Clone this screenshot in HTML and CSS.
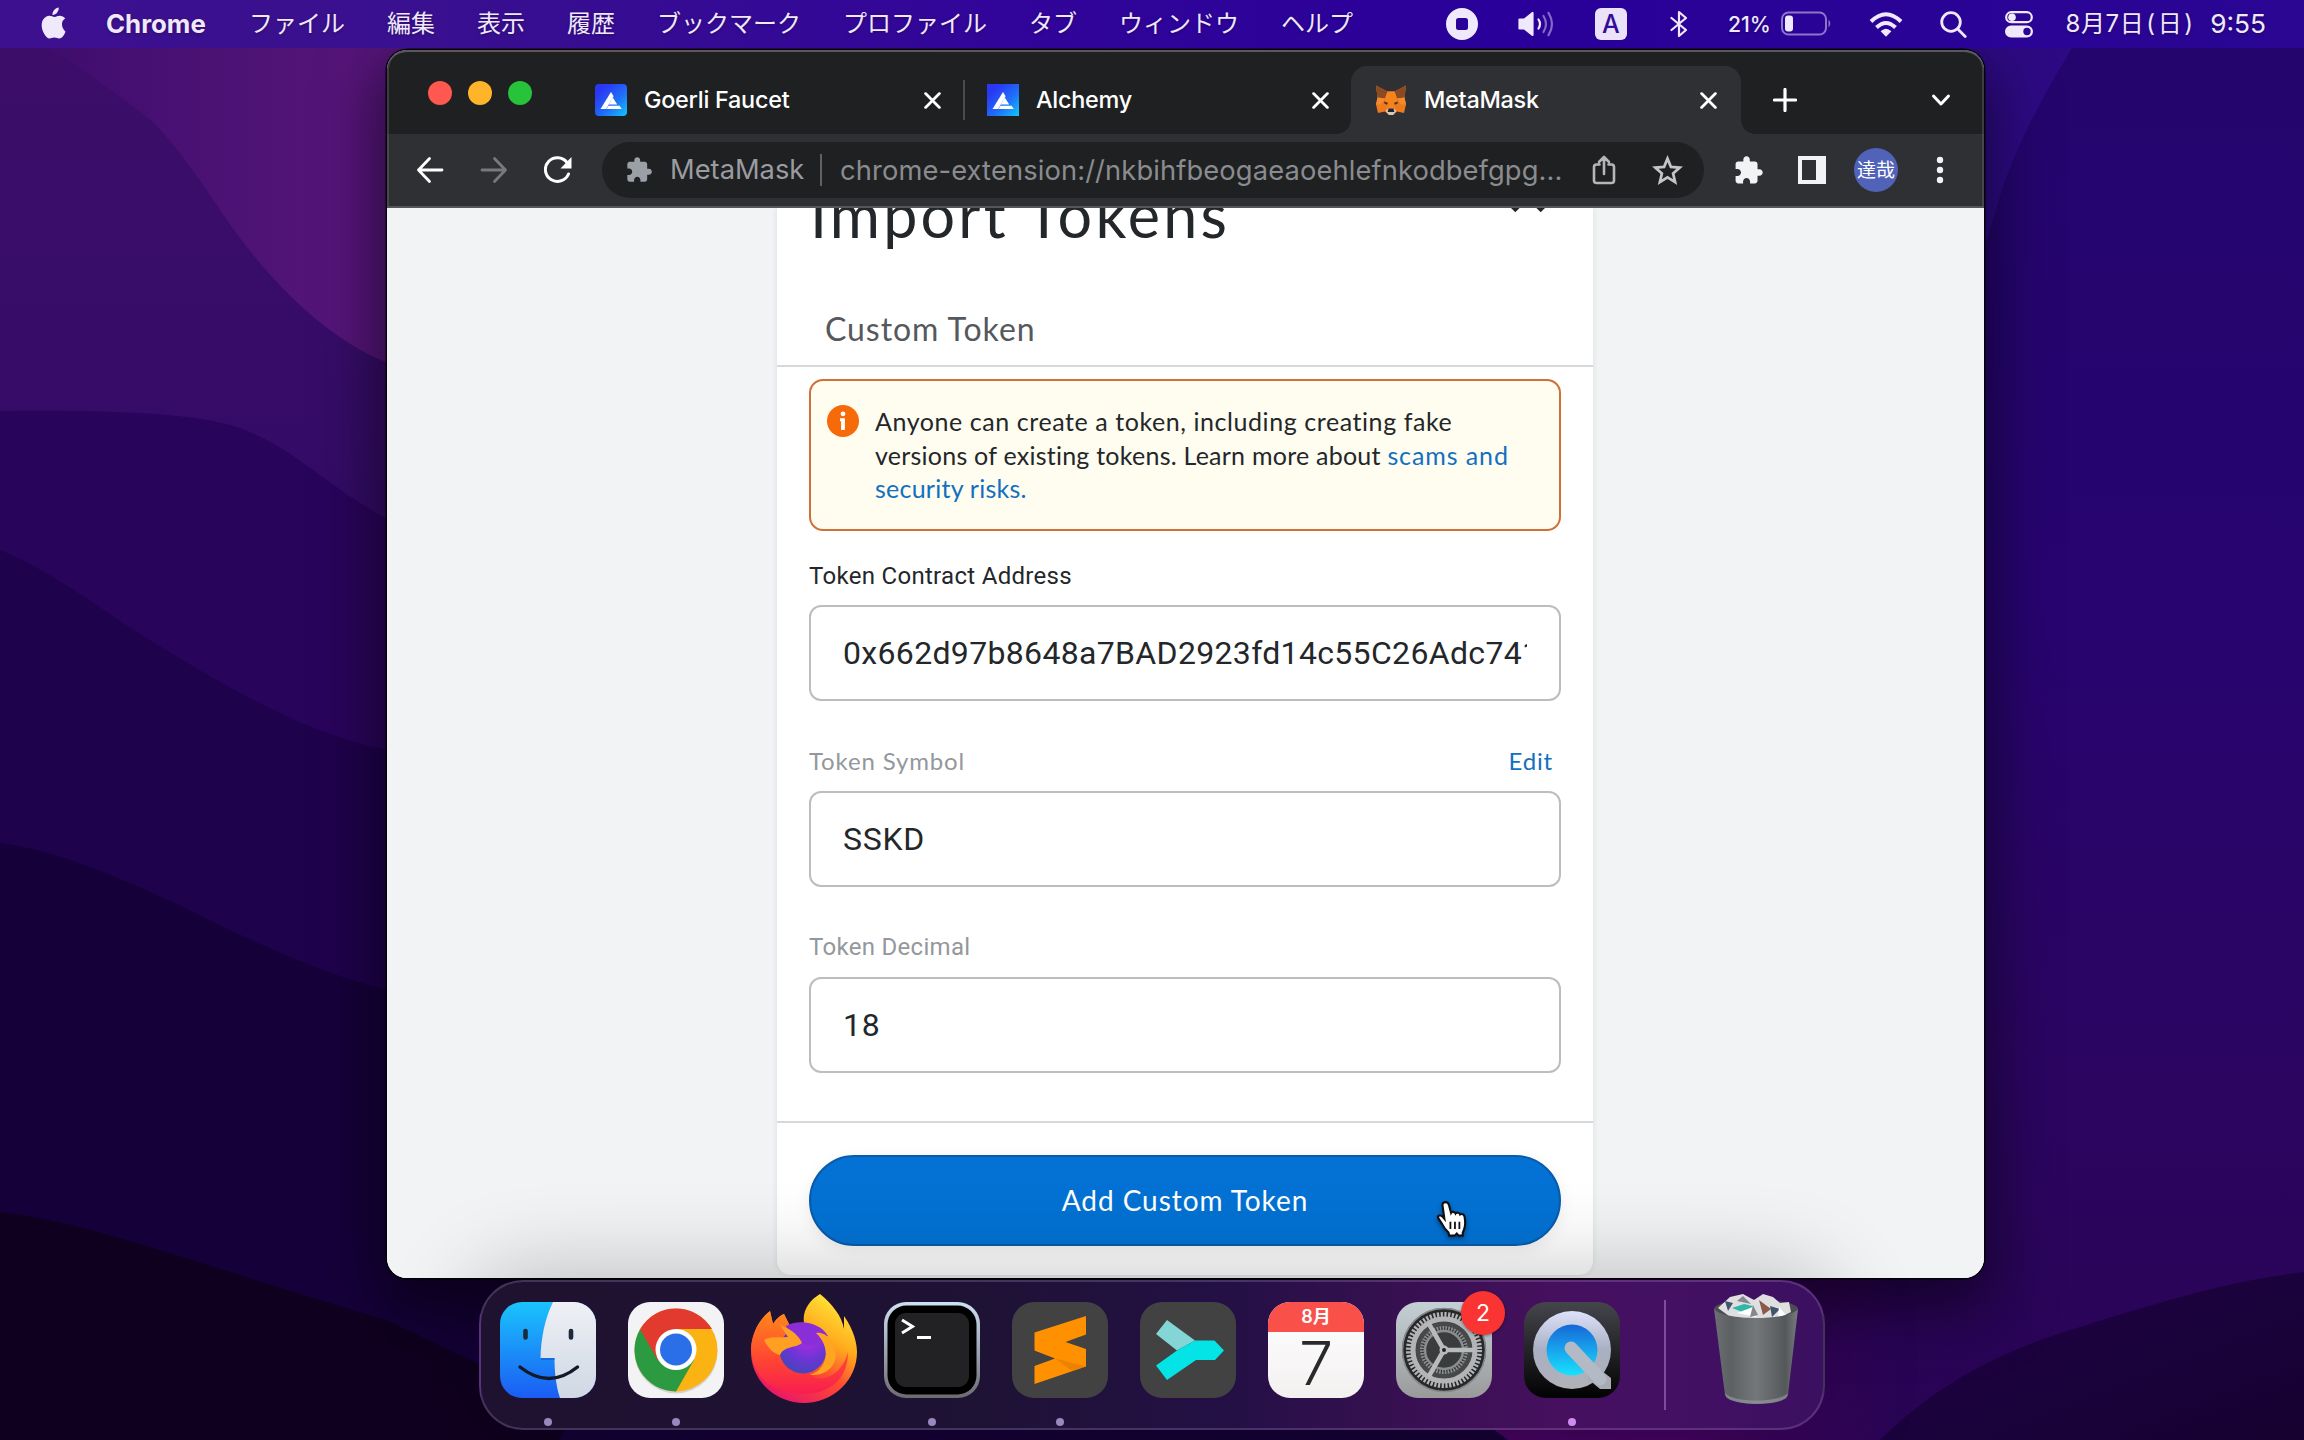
FILE: index.html
```html
<!DOCTYPE html>
<html lang="ja">
<head>
<meta charset="utf-8">
<title>MetaMask</title>
<link rel="stylesheet" href="styles.css">
</head>
<body>
<svg width="0" height="0" class="defs">
  <defs>
    <symbol id="puzzle" viewBox="0 0 24 24"><path d="M20.5 11H19V7c0-1.100-.9-2-2-2h-4V3.500C13 2.120 11.880 1 10.500 1S8 2.120 8 3.500V5H4c-1.100 0-1.990.9-1.990 2v3.800H3.500c1.490 0 2.700 1.210 2.700 2.700s-1.210 2.700-2.700 2.700H2V20c0 1.100.9 2 2 2h3.800v-1.500c0-1.490 1.210-2.700 2.700-2.700s2.700 1.210 2.700 2.700V22H17c1.100 0 2-.9 2-2v-4h1.500c1.380 0 2.500-1.120 2.500-2.500S21.880 11 20.500 11z"/></symbol>
    <symbol id="cross" viewBox="0 0 16 16"><path d="M1.500 1.500l13 13M14.500 1.500l-13 13" fill="none" stroke="currentColor" stroke-width="2.600" stroke-linecap="round"/></symbol>
    <symbol id="alchemy" viewBox="0 0 32 32"><path d="M16 8l2.600 4.200L11.200 25H5.500z" fill="#fff"/><path d="M17.800 13.500l4.400 7H13.800z" fill="#fff"/><path d="M13.500 21.800h11l2.300 3.200H11.500z" fill="#fff"/></symbol>
  </defs>
</svg>

<svg class="wallpaper" viewBox="0 0 2304 1440" preserveAspectRatio="none">
  <defs>
    <linearGradient id="base" x1="0" y1="0" x2="1" y2="0"><stop offset="0" stop-color="#3b0c6c"/><stop offset="0.150" stop-color="#551579"/><stop offset="0.500" stop-color="#4a1080"/><stop offset="0.860" stop-color="#2e0a84"/><stop offset="1" stop-color="#290a80"/></linearGradient>
    <linearGradient id="w1" x1="0" y1="0" x2="0" y2="1"><stop offset="0" stop-color="#3c0e6a"/><stop offset="0.350" stop-color="#330b66"/><stop offset="1" stop-color="#320963"/></linearGradient>
    <linearGradient id="r1" x1="0" y1="0" x2="0" y2="1"><stop offset="0" stop-color="#24056e"/><stop offset="0.400" stop-color="#270470"/><stop offset="0.750" stop-color="#2b0560"/><stop offset="1" stop-color="#290454"/></linearGradient>
    <linearGradient id="r2" x1="0" y1="0" x2="1" y2="1"><stop offset="0" stop-color="#1f0348"/><stop offset="1" stop-color="#160130"/></linearGradient>
    <linearGradient id="glow" gradientUnits="userSpaceOnUse" x1="1480" y1="0" x2="1900" y2="0"><stop offset="0" stop-color="#45035f"/><stop offset="0.500" stop-color="#430360"/><stop offset="1" stop-color="#430360" stop-opacity="0"/></linearGradient>
  </defs>
  <rect width="2304" height="1440" fill="url(#base)"/>
  <path d="M0 48H50C90 75 120 95 153 122C190 160 215 205 243 242C280 290 330 340 386 362L900 450V1440H0z" fill="url(#w1)"/>
  <path d="M0 411C60 410 180 410 230 425C290 442 330 490 386 518L900 700V1440H0z" fill="#29045b"/>
  <path d="M0 550C60 575 100 610 150 640C230 690 310 735 386 750L900 850V1440H0z" fill="#1f024c"/>
  <path d="M0 843C60 850 140 885 230 930C290 958 330 975 386 990L900 1100V1440H0z" fill="#16003a"/>
  <path d="M0 1212C90 1222 200 1265 386 1320L640 1440H0z" fill="#100020"/>
  <path d="M2072 48C2040 100 2015 150 2002 190C1980 260 1960 340 1900 400H1400V1440H2304V48z" fill="url(#r1)"/>
  <path d="M1400 1240H1910V1440H1400z" fill="url(#glow)"/>
  <path d="M640 1240H1380C1400 1330 1450 1400 1508 1440H560z" fill="#150036"/>
  <path d="M1880 1440C1930 1390 1990 1355 2070 1330C2150 1305 2230 1280 2304 1272V1440z" fill="url(#r2)"/>
</svg>

<header class="menubar">
  <svg class="apple" viewBox="0 0 26 32" fill="currentColor"><path d="M18.200 0.500c.3 2-.6 3.900-1.700 5.200-1.200 1.400-2.900 2.300-4.500 2.200-.3-1.900.6-3.800 1.700-5 1.200-1.300 3-2.300 4.500-2.400zM25 24.800c-.7 1.600-1 2.300-1.900 3.700-1.300 1.900-2.900 3-4.500 3-1.700 0-2.300-1-4.800-1s-3.200 1-4.800 1c-1.800 0-3.200-1.400-4.400-3.200C1.100 23.300 0 16.500 2.700 12.500c1.500-2.300 3.900-3.700 6.200-3.700 2.100 0 3.500 1.100 5.200 1.100 1.700 0 2.800-1.100 5.300-1.100 1.900 0 3.900 1 5.300 2.800-4.700 2.600-3.900 9.300.3 13.200z"/></svg>
  <nav class="menus">
    <b>Chrome</b><span>ファイル</span><span>編集</span><span>表示</span><span>履歴</span><span>ブックマーク</span><span>プロファイル</span><span>タブ</span><span>ウィンドウ</span><span>ヘルプ</span>
  </nav>
  <div class="status">
    <svg width="32" height="32" viewBox="0 0 32 32"><path fill="currentColor" fill-rule="evenodd" d="M16 0a16 16 0 100 32 16 16 0 000-32zm-3.500 10h7a2.500 2.500 0 012.500 2.500v7a2.500 2.500 0 01-2.500 2.500h-7a2.500 2.500 0 01-2.500-2.500v-7a2.500 2.500 0 012.500-2.500z"/></svg>
    <svg class="vol" width="36" height="26" viewBox="0 0 36 26" fill="none" stroke="currentColor" stroke-width="2.200" stroke-linecap="round"><path d="M1.500 8.500h5L14.500 2v22l-8-6.500h-5z" fill="currentColor" stroke-linejoin="round"/><path d="M20.500 8.500q3 4.500 0 9"/><path d="M25.500 5q5 8 0 16M30.500 1.800q7 11.200 0 22.400" opacity=".45"/></svg>
    <span class="ime">A</span>
    <svg class="bt" width="18" height="28" viewBox="0 0 18 28" fill="none" stroke="currentColor" stroke-width="2.200" stroke-linejoin="round" stroke-linecap="round"><path d="M1.500 8L16 20l-7 6V2l7 6L1.500 20"/></svg>
    <span class="pct">21%</span>
    <svg class="bat" width="52" height="26" viewBox="0 0 52 26"><rect x="1" y="1.500" width="44" height="22" rx="6.500" fill="none" stroke="currentColor" stroke-width="2" opacity=".5"/><rect x="4" y="4.500" width="8" height="16" rx="3" fill="currentColor"/><path d="M47.500 8.500q3.500 4 0 8z" fill="currentColor" opacity=".5"/></svg>
    <svg class="wifi" width="34" height="25" viewBox="0 0 34 25" fill="none" stroke="currentColor" stroke-width="4"><path d="M2 9.500Q17-5 32 9.500"/><path d="M7.500 15.500q9.500-9 19 0"/><path d="M11.600 19.200q5.400-5 10.800 0L17 24.800z" fill="currentColor" stroke="none"/></svg>
    <svg class="find" width="27" height="27" viewBox="0 0 27 27" fill="none" stroke="currentColor" stroke-width="2.800" stroke-linecap="round"><circle cx="11" cy="11" r="9.300"/><path d="M17.800 18l7.400 7.400"/></svg>
    <svg class="cc" width="28" height="27" viewBox="0 0 28 27"><rect x="1.200" y="1.200" width="25.600" height="10" rx="5" fill="none" stroke="currentColor" stroke-width="2.200"/><circle cx="7" cy="6.200" r="3.800" fill="currentColor"/><path fill="currentColor" fill-rule="evenodd" d="M6 14.500h16a6 6 0 010 12H6a6 6 0 010-12zm16 2.300a3.700 3.700 0 100 7.400 3.700 3.700 0 000-7.400z"/></svg>
    <span class="date">8月7日<i>(</i>日<i>)</i></span><span class="time">9:55</span>
  </div>
</header>

<main class="window">
  <div class="tabstrip">
    <div class="lights"><i class="red"></i><i class="amber"></i><i class="green"></i></div>
    <div class="tab first">
      <span class="fav round"><svg width="32" height="32"><use href="#alchemy"/></svg></span><span class="name">Goerli Faucet</span>
      <svg class="x"><use href="#cross"/></svg>
    </div>
    <div class="tab second">
      <span class="fav"><svg width="32" height="32"><use href="#alchemy"/></svg></span><span class="name">Alchemy</span>
      <svg class="x"><use href="#cross"/></svg>
    </div>
    <div class="tab active">
      <svg class="fox" viewBox="0 0 32 30"><path d="M1 0l11.500 6h7L31 0l-1.500 12L31 19l-2 8.500-7-1.500-4 3.500h-4L10 26l-7 1.500L1 19l1.500-7z" fill="#ee7a1d"/><path d="M1 0l11.500 6L10 13l-7.500-1zM31 0L19.500 6 22 13l7.500-1z" fill="#8a4a22"/><path d="M12.500 6h7L22 13l-3 10h-6l-3-10z" fill="#f5841f"/><path d="M2.500 12L10 13l-4 6H1zM29.500 12L22 13l4 6h5z" fill="#f28a2e"/><path d="M9 16l4 1.200-.8 2-2.700-1zM23 16l-4 1.200.8 2 2.700-1z" fill="#5a3320"/><path d="M10.500 25.500l2.500-2.500h6l2.500 2.500L18 29.500h-4z" fill="#d9c7b8"/><path d="M13.500 23h5l.8 3.500h-6.600z" fill="#22222a"/></svg>
      <span class="name">MetaMask</span>
      <svg class="x"><use href="#cross"/></svg>
    </div>
    <svg class="plus" viewBox="0 0 24 24"><path d="M12 1.500v21M1.500 12h21" stroke="#fff" stroke-width="3.200" stroke-linecap="round"/></svg>
    <svg class="chev" viewBox="0 0 20 14"><path d="M2.500 3l7.500 8 7.500-8" fill="none" stroke="#fff" stroke-width="3" stroke-linecap="round" stroke-linejoin="round"/></svg>
  </div>
  <div class="toolbar">
    <svg class="nav" viewBox="0 0 28 28" fill="none" stroke="#fff" stroke-width="2.800" stroke-linecap="round" stroke-linejoin="round"><path d="M26 14H2.500M13.500 2.500L2.500 14l11 11.500"/></svg>
    <svg class="nav" viewBox="0 0 28 28" fill="none" stroke="#77797d" stroke-width="2.800" stroke-linecap="round" stroke-linejoin="round"><path d="M2 14h23.500M14.500 2.500L25.500 14l-11 11.500"/></svg>
    <svg class="nav" viewBox="0 0 28 28"><path d="M24.500 18A12 11.800 0 1123 6.500" fill="none" stroke="#fff" stroke-width="3" stroke-linecap="round"/><path d="M27.500 1v11.500H16.500z" fill="#fff"/></svg>
    <div class="omnibox">
      <svg class="ext" fill="#9aa0a6"><use href="#puzzle"/></svg>
      <span class="site">MetaMask</span>
      <span class="url">chrome-extension://nkbihfbeogaeaoehlefnkodbefgpg...</span>
      <svg class="share" viewBox="0 0 24 30" fill="none" stroke="#b5b6b8" stroke-width="2.600" stroke-linejoin="round" stroke-linecap="round"><path d="M7.500 9.500H4.500a2.500 2.500 0 00-2.500 2.500v13.500A2.500 2.500 0 004.500 28h15a2.500 2.500 0 002.500-2.500V12a2.500 2.500 0 00-2.500-2.500h-3M12 19V2.500M7 7l5-5 5 5"/></svg>
      <svg class="star" viewBox="0 0 30 30" fill="none" stroke="#c4c5c7" stroke-width="2.600"><path d="M15 3.500l3.300 8 8.600.7-6.500 5.600 2 8.400L15 21.700l-7.400 4.500 2-8.400-6.500-5.600 8.600-.7z"/></svg>
    </div>
    <svg class="ext2" fill="#f1f3f4"><use href="#puzzle"/></svg>
    <svg class="panel" viewBox="0 0 28 28"><path fill="#f1f3f4" fill-rule="evenodd" d="M0 0h28v28H0zM4 4v20h14V4z"/></svg>
    <span class="avatar">達哉</span>
    <svg class="dots" viewBox="0 0 8 28" fill="#f1f3f4"><circle cx="4" cy="4" r="3.200"/><circle cx="4" cy="14" r="3.200"/><circle cx="4" cy="24" r="3.200"/></svg>
  </div>
  <div class="page">
    <section class="card">
      <div class="head">
        <h1>Import Tokens</h1>
        <svg class="close" viewBox="0 0 40 40"><path d="M5 5l30 30M35 5L5 35" stroke="#24272a" stroke-width="6.500"/></svg>
      </div>
      <div class="tabs"><span>Custom Token</span></div>
      <div class="body">
        <div class="warn">
          <svg class="info" viewBox="0 0 32 32"><circle cx="16" cy="16" r="16" fill="#f66a0a"/><circle cx="16" cy="8.800" r="2.400" fill="#fff"/><path d="M13 13.200h4.900v11.800h-3.800v-8.800H13z" fill="#fff"/></svg>
          <p><span>Anyone can create a token, including creating fake</span><br>versions of existing tokens. Learn more about <a class="wide">scams and</a><br><a>security risks.</a></p>
        </div>
        <div class="label dark">Token Contract Address</div>
        <div class="field address"><div class="clip">0x662d97b8648a7BAD2923fd14c55C26Adc74110F</div></div>
        <div class="label row"><span class="geo">Token Symbol</span><a class="edit">Edit</a></div>
        <div class="field short">SSKD</div>
        <div class="label">Token Decimal</div>
        <div class="field short">18</div>
      </div>
      <div class="foot"><button>Add Custom Token</button></div>
    </section>
  </div>
</main>

<div class="dock">
  <div class="app run">
    <svg viewBox="0 0 96 96"><defs><linearGradient id="fb" x1="0" y1="0" x2="0" y2="1"><stop offset="0" stop-color="#1ac4fd"/><stop offset="1" stop-color="#1b5cf3"/></linearGradient><linearGradient id="fw" x1="0" y1="0" x2="0" y2="1"><stop offset="0" stop-color="#eef0f5"/><stop offset="1" stop-color="#cfd8e4"/></linearGradient><clipPath id="sq"><rect width="96" height="96" rx="22"/></clipPath></defs>
    <g clip-path="url(#sq)"><rect width="96" height="96" fill="url(#fb)"/><path d="M53 0C45 16 41 36 40.500 56h14c0 14 1.500 28 5.500 40H96V0z" fill="url(#fw)"/><path d="M54.500 57H41" stroke="#1560d8" stroke-width="1.500"/></g>
    <path d="M25.500 29v6.500M71 29v6.500" stroke="#1c2a3c" stroke-width="4.600" stroke-linecap="round"/><path d="M20 65q29 23 57.500 0" fill="none" stroke="#121a2a" stroke-width="3.400" stroke-linecap="round"/></svg>
  </div>
  <div class="app run">
    <svg viewBox="0 0 96 96"><rect width="96" height="96" rx="22" fill="#f3f2f5"/><circle cx="48" cy="50" r="41.500" fill="#000" opacity=".13"/>
    <circle cx="48" cy="48" r="41.500" fill="#fbb314"/>
    <path d="M48 48L12.060 27.250A41.500 41.500 0 0048 89.500L66 58z" fill="#2b9a41"/>
    <path d="M48 27H83.900A41.500 41.500 0 0012.060 27.250L30 58.500L48 48z" fill="#e23a2e"/>
    <circle cx="48" cy="47.500" r="20.500" fill="#fff"/><circle cx="48" cy="47.500" r="16" fill="#2a6fe8"/></svg>
  </div>
  <div class="app">
    <svg viewBox="0 0 96 96" overflow="visible"><defs><linearGradient id="ff" x1=".85" y1="0" x2=".25" y2="1"><stop offset="0" stop-color="#fff03d"/><stop offset=".35" stop-color="#ffac1c"/><stop offset=".62" stop-color="#ff4a32"/><stop offset="1" stop-color="#e6136b"/></linearGradient><linearGradient id="fo" x1="0" y1="0" x2="0" y2="1"><stop offset="0" stop-color="#ff8a1a"/><stop offset=".6" stop-color="#ff4433"/><stop offset="1" stop-color="#f81d4f"/></linearGradient><radialGradient id="fp" cx=".6" cy=".25" r=".8"><stop offset="0" stop-color="#b22be4"/><stop offset=".6" stop-color="#6a35d4"/><stop offset="1" stop-color="#4247b8"/></radialGradient></defs>
    <path d="M64-8C76 2 86 14 88 27V14C98 28 101 42 101 50A53 51 0 01-5 50C-5 34 2 18 14 9L17 22C21 16 25 13 28 12L34 24C40 21 45 20 48 21C46 8 54-2 64-8z" fill="url(#ff)"/>
    <path d="M-5 46C-4 30 4 17 14 9L17 22C21 16 25 13 28 12L34 24C44 30 48 40 44 50C50 90 84 80 92 50C92 80 70 92 48 92C18 92-4 76-5 46z" fill="url(#fo)"/>
    <circle cx="47" cy="48" r="23.500" fill="url(#fp)"/><path d="M30 24C40 18 62 18 72 34L56 44L36 40z" fill="#8a2fd8"/>
    <path d="M60 31C68 29 80 38 80 54C78 68 66 74 54 73C74 66 74 44 60 31z" fill="#ffa51f"/>
    <path d="M8 38C14 34 24 36 32 35L24 23C38 28 44 36 46 41C40 46 28 44 24 53C18 52 12 46 8 38z" fill="#ffa023"/></svg>
  </div>
  <div class="app run">
    <svg viewBox="0 0 96 96"><defs><linearGradient id="tb" x1="0" y1="0" x2="0" y2="1"><stop offset="0" stop-color="#cfe0f5"/><stop offset="1" stop-color="#6d6b70"/></linearGradient></defs><rect width="96" height="96" rx="22" fill="url(#tb)"/><rect x="3.500" y="3.500" width="89" height="89" rx="19" fill="#000"/><rect x="11" y="11" width="74" height="74" rx="11" fill="#222224"/><path d="M18 18l10.500 6.500L18 31M33 35.500h14" fill="none" stroke="#fff" stroke-width="3"/></svg>
  </div>
  <div class="app run">
    <svg viewBox="0 0 96 96"><rect width="96" height="96" rx="22" fill="#424242"/><path d="M74 14v18.500L53.500 40 74 47v17.500L22.500 48.500V30.500z" fill="#ff9100"/><path d="M74 64.500L22.500 82V64L43 56.500 22.500 48.500 74 47.500z" fill="#ff9100"/><path d="M43 56.500L74 64.500 60 69z" fill="#d97400" opacity=".5"/></svg>
  </div>
  <div class="app">
    <svg viewBox="0 0 96 96"><rect width="96" height="96" rx="22" fill="#424242"/><path d="M27 18L55 38.500 37 48.500 16 32z" fill="#84d6d6"/><path d="M55 38.500H74.500L84 48.500 75 58H56L27 78 16 63.500 37 48.500z" fill="#04e4e6"/></svg>
  </div>
  <div class="app cal"><div>8月</div><b>7</b></div>
  <div class="app">
    <svg viewBox="0 0 96 96"><defs><linearGradient id="sb" x1="0" y1="0" x2="0" y2="1"><stop offset="0" stop-color="#c4d0d6"/><stop offset="1" stop-color="#9a9a9a"/></linearGradient></defs><rect width="96" height="96" rx="22" fill="url(#sb)"/><circle cx="48" cy="48" r="42" fill="#26282a"/><circle cx="48" cy="48" r="41.500" fill="none" stroke="#85898c" stroke-width="1.500"/>
    <circle cx="48" cy="48" r="35.500" fill="none" stroke="#b2b4b6" stroke-width="5" stroke-dasharray="2.200 1.520"/><circle cx="48" cy="48" r="31" fill="#46484a" stroke="#b2b4b6" stroke-width="5"/><circle cx="48" cy="48" r="22" fill="#2b2d2f" stroke="#8b8e90" stroke-width="4" stroke-dasharray="1.600 1.300"/><circle cx="48" cy="48" r="19" fill="#3a3c3e" stroke="#8b8e90" stroke-width="2.500"/><path d="M48 48h31M48 48L32.500 21.200M48 48L32.500 74.800" stroke="#b8babc" stroke-width="4.600"/><circle cx="48" cy="48" r="4.500" fill="#b8babc"/><circle cx="48" cy="48" r="2" fill="#222"/></svg>
    <span class="badge">2</span>
  </div>
  <div class="app run bright">
    <svg viewBox="0 0 96 96"><defs><linearGradient id="qb" x1="0" y1="0" x2="0" y2="1"><stop offset="0" stop-color="#45464c"/><stop offset="1" stop-color="#020203"/></linearGradient><linearGradient id="qs" x1="0" y1="0" x2="0" y2="1"><stop offset="0" stop-color="#dde2fa"/><stop offset=".5" stop-color="#a9afc2"/><stop offset="1" stop-color="#b0b2b8"/></linearGradient><linearGradient id="qi" x1="0" y1="0" x2="0" y2="1"><stop offset="0" stop-color="#1767d8"/><stop offset="1" stop-color="#18e2ff"/></linearGradient></defs><rect width="96" height="96" rx="22" fill="url(#qb)"/><circle cx="48" cy="48" r="39" fill="url(#qs)"/><path d="M62 66L78 69 87 76V87H76L64 77z" fill="#a9abb2"/><circle cx="48" cy="48" r="25.500" fill="url(#qi)"/><path d="M47 46L76 77" stroke="#b4b9c6" stroke-width="13" stroke-linecap="round"/></svg>
  </div>
  <div class="rule"></div>
  <svg class="trash" viewBox="0 0 86 112"><defs><linearGradient id="tr" x1="0" y1="0" x2="1" y2="0"><stop offset="0" stop-color="#6c7073"/><stop offset=".2" stop-color="#5c6063"/><stop offset=".5" stop-color="#74787a"/><stop offset=".85" stop-color="#54585b"/><stop offset="1" stop-color="#787c7e"/></linearGradient></defs>
  <ellipse cx="43" cy="16" rx="42" ry="9.500" fill="#4b4d51"/><path d="M5 15L17 4l13-3 11 6L50 1l10 3 7 6 9-1 2 10-12 6-46 1z" fill="#dfdfe2"/><path d="M19 15l12-4 9 2-6 8z" fill="#2fb8a6"/><path d="M46 7l12 9-8 6z" fill="#8c5a4a"/><path d="M57 13l10 3-8 8zM12 8l8 2-5 8z" fill="#40546c"/><path d="M24 20l16-6 3 10zM66 14l7 8-8 2z" fill="#fff"/><path d="M30 3l8 8-14-3zM40 12l5 10-8 2z" fill="#86878c"/>
  <path d="M1 16C10 28 76 28 85 16L75 102C70 114 18 114 12 102z" fill="url(#tr)"/><path d="M12 100C20 110 66 110 75 100L74 104C68 113 20 113 13 104z" fill="#9a9ea1" opacity=".6"/></svg>
</div>

<svg class="cursor" viewBox="0 0 32 36"><path d="M10 2c2 0 2.800 1.300 3.200 3l1.900 7.200c.6-1.200 3.500-1.400 4.300.6 1-1.400 3.700-1 4.300.9 1.300-1 3.700-.3 4.100 1.700.7 3.400 1.200 8.400-.3 12.100l-1.300 3.500v2.800h-4l-1.700-2-2 2h-5.200l-.6-3c-2.200-1.900-4.600-5-6.200-8.200L2.800 17c-.6-2.300 2.300-3.100 4-1.500l2 2.300L7 5C6.800 3.400 8 2 10 2z" fill="#fff" stroke="#101014" stroke-width="2"/><path d="M14.500 20.500v7M18.800 20.500v7M23 20.500v7" stroke="#101014" stroke-width="1.700"/></svg>
</body>
</html>
```

FILE: styles.css
```css
* { box-sizing: border-box; }
body {
  margin: 0;
  width: 2304px;
  height: 1440px;
  overflow: hidden;
  position: relative;
  background: #1d0348;
  font-family: Inter, "Noto Sans CJK JP", sans-serif;
}
svg { display: block; flex: none; }
.defs { position: absolute; }
.wallpaper { position: absolute; inset: 0; width: 2304px; height: 1440px; z-index: -1; }

/* Menu bar */
.menubar {
  position: relative;
  height: 48px;
  display: flex;
  align-items: center;
  padding: 0 38px 0 40px;
  color: #f0e8fb;
  background: linear-gradient(90deg, #3d1090 0, #39108f 400px, #310599 1000px, #290099 1500px, #2a0693 2304px);
  font-size: 24px;
  text-shadow: 0 1px 3px rgba(0,0,0,.3);
}
.apple { width: 27px; height: 32px; margin: -2px 39px 0 0; }
.menus { display: flex; gap: 42px; line-height: 46px; }
.menus b { font-size: 25.800px; font-weight: 700; width: 101px; }
.menus span { white-space: nowrap; }
.status { margin-left: auto; display: flex; align-items: center; gap: 39px; }
.vol { margin-left: 1px; }
.ime {
  width: 32px; height: 32px; border-radius: 6px; background: #ebe2fa; color: #330b9a; margin-left: 2px;
  font: 500 25px/32px Inter, sans-serif; text-align: center; text-shadow: none;
}
.bt { margin-left: 4px; }
.pct { font-size: 21.200px; font-weight: 500; width: 43px; margin-left: 1px; }
.bat { margin-left: -29px; }
.wifi { margin-left: -3px; }
.find, .cc { margin-left: -1.500px; }
.date { display: flex; line-height: 46px; margin-left: -6.500px; font-size: 24px; letter-spacing: .6px; }
.date i { font-style: normal; margin: 0 2px; }
.time { line-height: 46px; font-size: 26.300px; margin-left: -24.500px; }

/* Browser window */
.window {
  position: absolute; left: 387px; top: 50px; width: 1597px; height: 1228px;
  display: flex; flex-direction: column;
  border-radius: 20px;
  overflow: hidden;
  background: #f1f3f5;
}
body::before {
  content: ""; position: absolute; left: 387px; top: 50px; width: 1597px; height: 1228px;
  border-radius: 20px;
  box-shadow: 0 0 0 1.500px rgba(0,0,0,.85), 0 24px 60px 10px rgba(0,0,0,.5);
}
.tabstrip { height: 84px; flex: none; display: flex; align-items: center; background: #1f2022; padding-top: 16px; box-shadow: inset 0 2px 0 #58595c, inset 2px 0 0 #3c3d3f, inset -2px 0 0 #3c3d3f; border-radius: 20px 20px 0 0; }
.lights { display: flex; gap: 16px; margin: -14px 55px 0 41px; }
.lights i { width: 24px; height: 24px; border-radius: 50%; }
.red { background: #ff5850; }
.amber { background: #ffb429; }
.green { background: #27c43b; }
.tab { display: flex; align-items: center; height: 68px; color: #fff; font-size: 23.400px; font-weight: 500; letter-spacing: -.25px; }
.tab .name { flex: 1; margin-top: -2px; }
.tab .x { width: 17px; height: 17px; }
.fav { background: linear-gradient(135deg, #2a38f4 20%, #1f6ff7 60%, #12c8fb); width: 32px; height: 32px; margin-right: 17px; }
.fav.round { border-radius: 4px; }
.first { width: 378px; padding: 0 24px 0 8px; position: relative; }
.first::after { content: ""; position: absolute; right: 0; top: 14px; width: 2px; height: 40px; background: #4a4b4e; }
.second { width: 386px; padding: 0 22px; }
.active { width: 390px; background: #2f3033; border-radius: 16px 16px 0 0; padding: 0 24px; position: relative; }
.active::before, .active::after { content: ""; position: absolute; bottom: 0; width: 14px; height: 14px; }
.active::before { left: -14px; background: radial-gradient(circle at 0 0, transparent 13.500px, #2f3033 14px); }
.active::after { right: -14px; background: radial-gradient(circle at 100% 0, transparent 13.500px, #2f3033 14px); }
.fox { width: 32px; height: 31px; margin-right: 17px; }
.plus { width: 24px; height: 24px; margin-left: 32px; }
.chev { width: 20px; height: 14px; margin-left: 134px; }

.toolbar { height: 74px; flex: none; display: flex; align-items: center; background: #2f3033; padding: 0 39px 0 29px; border-bottom: 2px solid #55565a; box-shadow: inset 2px 0 0 #47484b, inset -2px 0 0 #47484b; }
.nav { width: 28px; height: 28px; margin-right: 36px; }
.nav:nth-child(3) { margin-right: 30px; }
.omnibox { width: 1102px; height: 56px; border-radius: 28px; background: #1f2022; display: flex; align-items: center; padding: 0 16px 0 23px; color: #8a8c8f; font-size: 27.300px; }
.ext { width: 28px; height: 28px; }
.site { margin-left: 17px; width: 152px; border-right: 2px solid #606165; line-height: 32px; color: #9a9ca0; }
.url { margin-left: 18px; width: 752px; flex: none; white-space: nowrap; letter-spacing: .12px; }
.share { width: 24px; height: 30px; }
.star { width: 31px; height: 31px; margin-left: 36px; }
.ext2 { width: 31px; height: 31px; margin-left: 29px; }
.panel { width: 28px; height: 28px; margin-left: 34px; }
.avatar { width: 44px; height: 44px; margin-left: 28px; border-radius: 50%; background: #5163b8; color: #fff; font: 19px/42px "Noto Sans CJK JP", sans-serif; text-align: center; }
.dots { width: 8px; height: 28px; margin-left: 38px; }

/* Import page */
.page { flex: 1; min-height: 0; overflow: hidden; position: relative; background: #f1f3f5; }
.card { width: 816px; height: 1067px; margin-left: 390px; background: #fff; border-radius: 0 0 14px 14px; box-shadow: 0 0 6px rgba(0,0,0,.09); display: flex; flex-direction: column; color: #24272a; }
.head { height: 74px; flex: none; display: flex; justify-content: space-between; padding: 0 45px 0 33px; }
h1 { margin: -27px 0 0; font: 400 61px/68px Lato, sans-serif; letter-spacing: 3.200px; white-space: nowrap; }
.close { width: 40px; height: 40px; margin-top: -33px; }
.tabs { height: 85px; flex: none; border-bottom: 2px solid #d6d9dc; padding: 27px 48px 0; font: 32px/40px Lato, sans-serif; letter-spacing: .95px; color: #55585c; }
.body { height: 756px; flex: none; padding: 12px 32px 0; border-bottom: 2px solid #d6d9dc; }
.warn { height: 152px; border: 2px solid #cf7038; border-radius: 14px; background: #fffcf0; display: flex; padding: 24px 16px 20px; margin-bottom: 28px; }
.info { width: 32px; height: 32px; margin-right: 16px; }
.warn p { margin: 0; font: 25px/33.600px Lato, sans-serif; letter-spacing: .24px; white-space: nowrap; color: #24272a; }
.warn p span { letter-spacing: .57px; }
a { color: #1270c0; }
a.wide { letter-spacing: .9px; }
.label { font: 24px/34px Roboto, sans-serif; letter-spacing: .3px; color: #94979b; height: 34px; }
.label.dark { color: #24272a; }
.row { display: flex; justify-content: space-between; padding-right: 8px; }
.geo, .edit { font-family: Lato, sans-serif; letter-spacing: .85px; }
.field { height: 96px; border: 2px solid #bbbec1; border-radius: 12px; background: #fff; margin: 13px 0 43px; padding: 0 32px; font: 32px/92px Roboto, sans-serif; letter-spacing: .33px; color: #24272a; }
.field.address { margin-top: 12px; }
.field.short { letter-spacing: .7px; }
.clip { overflow: hidden; white-space: nowrap; width: 684px; }
.foot { padding: 32px 32px 0; }
button { display: block; width: 752px; height: 91px; border: 2px solid #0a5cab; border-radius: 46px; background: #0372d4; color: #fff; font: 28px/84px Lato, sans-serif; letter-spacing: .95px; padding: 0 0 2px; box-shadow: 0 4px 16px rgba(0,0,0,.07); }

/* Dock */
.dock {
  position: absolute; left: 479px; top: 1280px; width: 1346px; height: 150px;
  display: flex; align-items: flex-start; padding: 20px 0 0 19px; gap: 32px;
  border: 2px solid rgba(170,140,200,.27); border-radius: 44px;
  background: linear-gradient(90deg, #1f1230 0, #1e1235 500px, #241045 750px, #35104f 900px, #46105f 1080px, #431063 1200px, #3b1060 100%);
  box-shadow: 0 0 90px 6px rgba(0,0,0,.24);
}
.app { width: 96px; height: 96px; position: relative; }
.app svg { width: 96px; height: 96px; }
.run::after { content: ""; position: absolute; left: 44px; top: 116px; width: 8px; height: 8px; border-radius: 50%; background: #9a87bd; }
.bright::after { background: #cd8df0; }
.cal { border-radius: 22px; background: linear-gradient(#fff, #f3f0f0); text-align: center; color: #2a2a2c; }
.cal div { height: 30px; border-radius: 22px 22px 0 0; background: #f9504a; color: #fff; font: 600 18px/30px Inter, "Noto Sans CJK JP", sans-serif; }
.cal b { display: block; font: 300 61px/62px Inter, sans-serif; }
.badge { position: absolute; left: 65px; top: -11px; width: 44px; height: 44px; border-radius: 50%; background: #fa3432; color: #fff; font: 23px/44px Inter, sans-serif; text-align: center; box-shadow: 0 1px 3px rgba(0,0,0,.4); }
.rule { width: 2px; height: 110px; margin: -2px 0 0 12px; background: rgba(180,120,210,.55); }
.trash { width: 86px; height: 112px; margin: -9px 0 0 15px; }

.cursor { position: absolute; left: 1435px; top: 1200px; width: 34px; height: 38px; filter: drop-shadow(0 2px 2px rgba(0,0,0,.4)); }
```
